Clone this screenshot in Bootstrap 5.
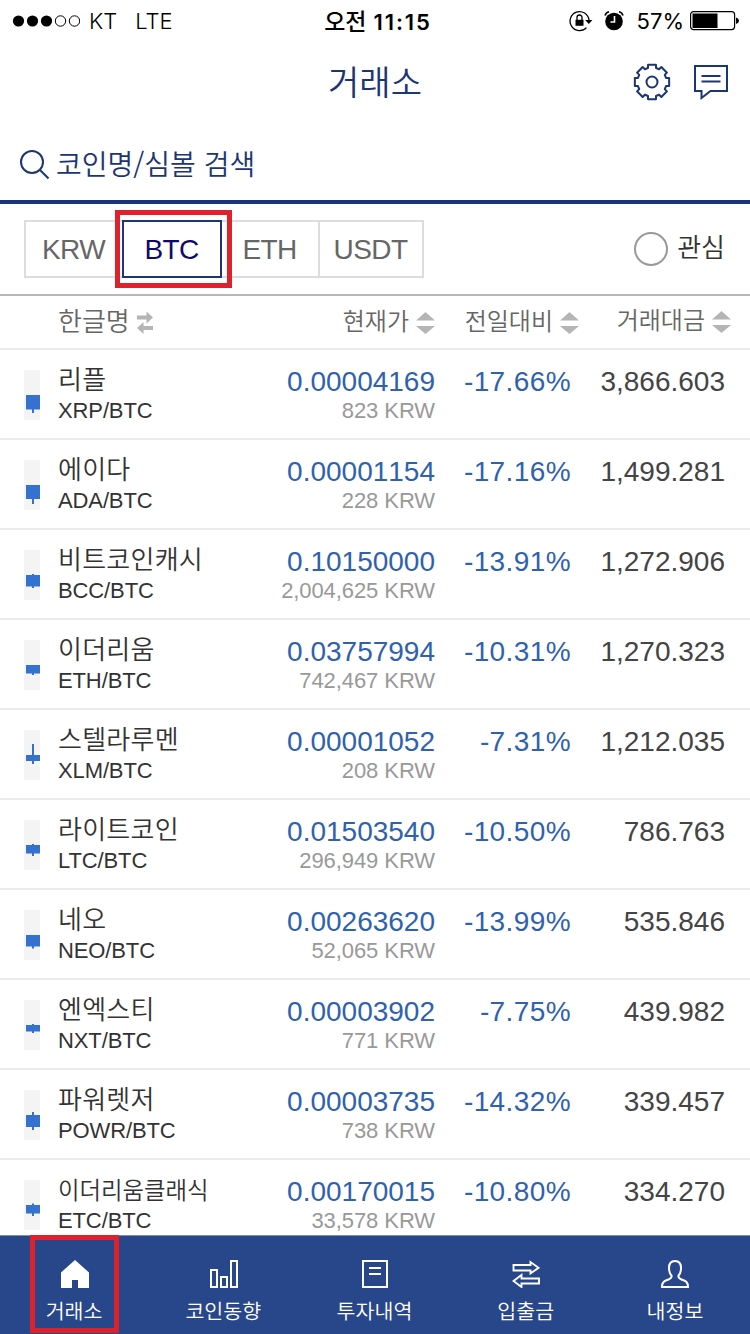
<!DOCTYPE html>
<html lang="ko">
<head>
<meta charset="utf-8">
<meta name="viewport" content="width=device-width, initial-scale=1">
<title>거래소</title>
<link href="https://cdn.jsdelivr.net/npm/bootstrap@5.3.0/dist/css/bootstrap.min.css" rel="stylesheet">
<style>
  :root { --navy: #1c3674; --ko: "Noto Sans CJK KR", sans-serif; --mark: #dc222c; }
  html, body { height: 1334px; overflow: hidden; }
  body { background: #fff; color: #333; font-family: "Liberation Sans", "Noto Sans CJK KR", sans-serif; }
  svg { display: block; flex: none; }
  .app { width: 750px; height: 1334px; }
  .ko { font-family: var(--ko); font-weight: 350; white-space: nowrap; }

  .status { height: 42px; font: 400 22px/41px Inter, "Noto Sans CJK KR", sans-serif; color: #000; padding: 0 11px 0 12px; }
  .status .side { width: 300px; }
  .carrier { font-weight: 300; margin-left: 9px; }
  .clock { font-weight: 600; white-space: nowrap; font-kerning: none; letter-spacing: 1.9px; padding-left: 5px; line-height: 40px; }
  .clock .ko { font-weight: 500; font-size: 23px; letter-spacing: -.2px; }

  .titlebar { height: 82px; color: var(--navy); padding: 0 22px 2px; }
  .titlebar .side { width: 200px; gap: 23px; }
  .titlebar h1 { font-size: 34px; line-height: 78px; }
  .search { height: 80px; border-bottom: 4px solid #16357c; color: var(--navy); padding: 2px 20px 0; gap: 7px; }
  .search .ko { font-size: 28px; line-height: 76px; }

  .markets { height: 92px; border-bottom: 2px solid #b5b8b8; padding: 0 25px 0 24px; }
  .tabs { width: 400px; height: 58px; border: 2px solid #dcdcdc; font-size: 28px; color: #666; }
  .tabs > div { line-height: 56px; text-align: center; letter-spacing: -.6px; padding-right: 1px; }
  .tab-on { position: relative; width: 100px; margin: -2px 0; border: 2px solid var(--navy); color: #100a66; }
  .marker { position: absolute; border: 5px solid var(--mark); pointer-events: none; }
  .tab-on .marker { inset: -12px; left: -9px; }
  .fav { gap: 9px; color: #333; }
  .fav i { width: 34px; height: 34px; border: 2px solid #999; border-radius: 50%; }
  .fav .ko { font-size: 26px; line-height: 50px; margin-top: -6px; }

  .coin { display: grid; grid-template-columns: 34px 1fr 180px 136px 154px; padding: 0 25px 0 24px; border-bottom: 2px solid #ebebeb; }
  .colhead { height: 54px; color: #666; font-size: 24px; line-height: 48px; }
  .colhead > div { display: flex; align-items: center; gap: 7px; height: 48px; }
  .colhead svg { margin-top: 5px; }
  .coin.quote { height: 90px; }
  .candle { width: 16px; height: 50px; background: #f4f4f4; margin-top: 20px; }
  .nm { font-size: 26px; line-height: 34px; padding-top: 11px; height: 46px; letter-spacing: .25px; }
  .nm.long { font-size: 23.4px; letter-spacing: 0; padding-top: 12px; }
  .sub { font-size: 22px; line-height: 30px; letter-spacing: -.12px; }
  .krw { font-size: 22px; line-height: 30px; color: #999; letter-spacing: -.08px; }
  .big { font-size: 28px; line-height: 34px; padding-top: 15px; height: 46px; text-align: right; white-space: nowrap; font-kerning: none; color: #444; }
  .big.down { color: #2f62ae; }
  .big.pct { letter-spacing: .4px; }

  .tabbar { height: 99px; background: #28468a; border-top: 1px solid #7d8fb5; color: #fff; }
  .tabbar > div { position: relative; padding: 24px 0 0; }
  .tabbar > div:nth-child(2), .tabbar > div:nth-child(3) { padding-right: 2px; }
  .tabbar .ko { font-size: 20.6px; line-height: 30px; margin: 7px 1px 0 0; }
  .tabbar .marker { top: -1px; left: 30px; width: 89px; height: 98px; }
</style>
</head>
<body>
<div class="app d-flex flex-column overflow-hidden">
  <div class="status d-flex justify-content-between flex-shrink-0">
    <div class="side d-flex align-items-center">
      <svg width="68" height="12" viewBox="0 0 68 12"><g fill="#000"><circle cx="6.5" cy="6" r="5.6"/><circle cx="20.500" cy="6" r="5.6"/><circle cx="34.500" cy="6" r="5.6"/></g><g fill="none" stroke="#000"><circle cx="48.500" cy="6" r="5.200"/><circle cx="62.500" cy="6" r="5.200"/></g></svg>
      <span class="carrier">KT</span><span class="carrier" style="margin-left:18px">LTE</span>
    </div>
    <div class="clock"><span class="ko">오전</span> 11:15</div>
    <div class="side d-flex align-items-center justify-content-end">
      <svg width="24" height="22" viewBox="0 0 24 22" fill="none" stroke="#000" stroke-width="1.300"><path d="M17.500 17.600A9.500 9.500 0 1 1 20 10"/><path d="M16.200 10h7.200l-3.600 4z" fill="#000" stroke="none"/><path d="M6.500 9.800h8v6h-8z" fill="#000" stroke="none"/><path d="M8 10V7.500a2.500 2.500 0 0 1 5 0V10"/></svg>
      <svg class="ms-2" width="26" height="22" viewBox="0 0 26 22"><circle cx="13" cy="11.500" r="8.800"/><path d="M13.500 6v6H9.500" fill="none" stroke="#fff" stroke-width="1.600"/><path d="M4 5.500Q5 2.500 8 1.800M22 5.500Q21 2.500 18 1.800" fill="none" stroke="#000" stroke-width="1.600"/></svg>
      <span style="margin:0 6px 0 10px">57%</span>
      <svg width="49" height="20" viewBox="0 0 49 20"><rect x=".600" y=".600" width="44" height="18" rx="3" fill="none" stroke="#000" stroke-width="1.200"/><path d="M2.500 2.500h25v14.500h-25z"/><path d="M46 6.500q3 1 3 3.200t-3 3.200z"/></svg>
    </div>
  </div>

  <header class="titlebar d-flex justify-content-between flex-shrink-0">
    <div class="side"></div>
    <h1 class="ko m-0">거래소</h1>
    <div class="side d-flex align-items-center justify-content-end">
      <svg id="gear" width="38" height="38" viewBox="-19 -19 38 38" fill="none" stroke="#1c3674" stroke-width="2"><circle r="5.500"/></svg>
      <svg width="34" height="36" viewBox="0 0 34 36" fill="none" stroke="#1c3674" stroke-width="2"><path d="M1 2h32v25H16.500L7.500 34v-7H1zM7.500 12h19M7.500 17.500h19"/></svg>
    </div>
  </header>

  <div class="search d-flex align-items-center flex-shrink-0">
    <svg style="margin-top:3px" width="29" height="29" viewBox="0 0 29 29" fill="none" stroke="#1c3674" stroke-width="2"><circle cx="12" cy="12" r="11"/><path d="M19.500 19.500l9 9"/></svg>
    <span class="ko">코인명/심볼 검색</span>
  </div>

  <div class="markets d-flex align-items-center justify-content-between flex-shrink-0">
    <div class="tabs d-flex">
      <div style="width:96px">KRW</div>
      <div class="tab-on">BTC<span class="marker"></span></div>
      <div style="width:96px">ETH</div>
      <div class="flex-fill" style="border-left:2px solid #dcdcdc">USDT</div>
    </div>
    <div class="fav d-flex align-items-center"><i></i><span class="ko">관심</span></div>
  </div>

  <div class="coin colhead ko flex-shrink-0">
    <div></div>
    <div style="font-size:26px">한글명 <svg width="17" height="23" viewBox="0 0 17 23" fill="#b5b5b5"><path d="M0 4.500H9.500V.500l6.500 6-6.500 6v-4H0zM16 15H6.500v-4L0 17l6.500 6v-4H16z"/></svg></div>
    <div class="justify-content-end">현재가 <svg class="sorter" width="19" height="22"></svg></div>
    <div class="justify-content-end" style="margin-right:-8px">전일대비 <svg class="sorter" width="19" height="22"></svg></div>
    <div class="justify-content-end" style="margin:-1px -6px 0 0">거래대금 <svg class="sorter" width="19" height="22"></svg></div>
  </div>

  <main id="quotes" class="flex-fill overflow-hidden" style="min-height:0"></main>

  <nav class="tabbar d-flex flex-shrink-0">
    <div class="col d-flex flex-column align-items-center"><svg width="28" height="28" viewBox="0 0 28 28" fill="#fff"><path d="M14 0L28 12.500V28H17v-8h-6v8H0V12.500z"/></svg><span class="ko">거래소</span><span class="marker"></span></div>
    <div class="col d-flex flex-column align-items-center"><svg width="28" height="28" viewBox="0 0 28 28" fill="none" stroke="#fff" stroke-width="2"><path d="M1 10h6v17H1zM11 17h6v10h-6zM21 1h6v26h-6z"/></svg><span class="ko">코인동향</span></div>
    <div class="col d-flex flex-column align-items-center"><svg width="26" height="28" viewBox="0 0 26 28" fill="none" stroke="#fff" stroke-width="2"><path d="M1 1h24v26H1zM7 8h12M7 14h12"/></svg><span class="ko">투자내역</span></div>
    <div class="col d-flex flex-column align-items-center"><svg width="28" height="28" viewBox="0 0 28 28" fill="none" stroke="#fff" stroke-width="1.900"><path d="M1.500 5h17V2l8 5.800-8 5.700V10.500h-17zM27 18.500H9.500V15L1.500 21l8 6v-3.500H27z"/></svg><span class="ko">입출금</span></div>
    <div class="col d-flex flex-column align-items-center"><svg width="28" height="28" viewBox="0 0 28 28" fill="none" stroke="#fff" stroke-width="2"><path d="M10.500 15.500C8.500 13.500 8 11 8 8c0-4.500 2.500-7 6-7s6 2.500 6 7c0 3-.500 5.500-2.500 7.500-.500 2 .500 3 3 4C24.500 21 27 21.500 27 27H1c0-5.500 2.500-6 6.500-7.500 2.500-1 3.500-2 3-4z"/></svg><span class="ko">내정보</span></div>
  </nav>
</div>

<script src="https://cdn.jsdelivr.net/npm/bootstrap@5.3.0/dist/js/bootstrap.bundle.min.js"></script>
<script>
  // name, symbol, price, won price, change, volume, candle [body bottom, wick top, wick bottom]
  const coins = [
    ["리플", "XRP", "0.00004169", "823", "-17.66%", "3,866.603", [39.5, 25, 43]],
    ["에이다", "ADA", "0.00001154", "228", "-17.16%", "1,499.281", [39, 25, 44]],
    ["비트코인캐시", "BCC", "0.10150000", "2,004,625", "-13.91%", "1,272.906", [36.5, 24, 38]],
    ["이더리움", "ETH", "0.03757994", "742,467", "-10.31%", "1,270.323", [33.5, 25, 35]],
    ["스텔라루멘", "XLM", "0.00001052", "208", "-7.31%", "1,212.035", [31, 14, 34]],
    ["라이트코인", "LTC", "0.01503540", "296,949", "-10.50%", "786.763", [33.5, 24, 36]],
    ["네오", "NEO", "0.00263620", "52,065", "-13.99%", "535.846", [36.5, 25, 38.5]],
    ["엔엑스티", "NXT", "0.00003902", "771", "-7.75%", "439.982", [31.5, 24, 33]],
    ["파워렛저", "POWR", "0.00003735", "738", "-14.32%", "339.457", [37, 22, 40]],
    ["이더리움클래식", "ETC", "0.00170015", "33,578", "-10.80%", "334.270", [33.5, 23.5, 36]]
  ];
  document.getElementById("quotes").innerHTML = coins.map(([name, sym, price, won, pct, vol, [b, t, w]]) => `
    <div class="coin quote">
      <svg class="candle" viewBox="0 0 16 50" fill="#3572cf"><path d="M2 25h14V${b}H2zM8 ${t}h2V${w}H8z"/></svg>
      <div><div class="nm ko ${name.length > 6 ? "long" : ""}">${name}</div><div class="sub">${sym}/BTC</div></div>
      <div class="text-end"><div class="big down">${price}</div><div class="krw">${won} KRW</div></div>
      <div class="big down pct">${pct}</div>
      <div class="big">${vol}</div>
    </div>`).join("");

  document.querySelectorAll(".sorter").forEach(s => {
    s.innerHTML = '<path fill="#b5b5b5" d="M9.500 0L19 8.500H0zM0 14h19L9.500 22z"/>';
  });

  // eight-tooth gear outline
  let d = "";
  for (let i = 0; i < 8; i++) {
    for (const [a, r] of [[-13, 17.6], [13, 17.6], [16, 14.6], [29, 14.6]]) {
      const q = (i * 45 + a) * Math.PI / 180;
      d += (d ? "L" : "M") + (r * Math.sin(q)).toFixed(2) + " " + (-r * Math.cos(q)).toFixed(2);
    }
  }
  document.getElementById("gear").insertAdjacentHTML("beforeend", `<path stroke-linejoin="round" d="${d}z"/>`);
</script>
</body>
</html>
